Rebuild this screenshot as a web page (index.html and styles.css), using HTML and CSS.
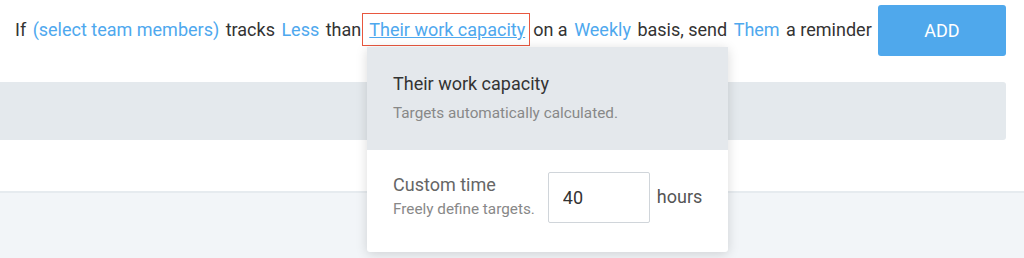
FILE: index.html
```html
<!DOCTYPE html>
<html lang="en">
<head>
    <meta charset="UTF-8">
    <meta name="viewport" content="width=device-width, initial-scale=1.0">
    <title>Reminder rule</title>
    <link rel="stylesheet" href="styles.css">
</head>
<body>
    <div class="rule-row">
        <p class="sentence">
            If <a class="pick">(select team members)</a> tracks <a class="pick">Less</a> than<a class="pick active">Their work capacity</a>on a <a class="pick">Weekly</a> basis, send <a class="pick">Them</a> a reminder
        </p>
        <button class="add-btn">ADD</button>
    </div>

    <div class="rule-bar"></div>
    <div class="blank-row"></div>
    <div class="footer-area"></div>

    <!-- dropdown for the target option -->
    <div class="target-menu">
        <div class="menu-option selected">
            <div class="option-title">Their work capacity</div>
            <div class="option-note">Targets automatically calculated.</div>
        </div>
        <div class="menu-option custom">
            <div class="custom-text">
                <div class="option-title">Custom time</div>
                <div class="option-note">Freely define targets.</div>
            </div>
            <input type="text" class="hours-input" value="40">
            <span class="hours-label">hours</span>
        </div>
    </div>
</body>
</html>
```

FILE: styles.css
```css
body {
    margin: 0;
    font-family: Roboto, "Liberation Sans", sans-serif;
    background-color: #fff;
    color: #333;
    position: relative;
    height: 258px;
    overflow: hidden;
}
.rule-row {
    display: flex;
    justify-content: space-between;
    align-items: center;
    padding: 5px 18px 0 15px;
}
.sentence {
    margin: 0 0 2px 0;
    font-size: 18px;
    white-space: nowrap;
}
.pick {
    color: #4ea8ee;
    padding: 0 2px;
    cursor: pointer;
}
.pick.active {
    text-decoration: underline;
    border: 1px solid #e8573f;
    padding: 5px 4px 5px 6px;
    margin: 0 3px 0 1px;
}
.add-btn {
    flex-shrink: 0;
    width: 128px;
    height: 51px;
    background-color: #4fa8ec;
    color: #fff;
    border: none;
    border-radius: 3px;
    font-family: inherit;
    font-size: 18px;
    cursor: pointer;
}
.rule-bar {
    margin: 26px 18px 0 0;
    height: 58px;
    background-color: #e4e9ed;
    border-radius: 0 3px 3px 0;
}
.blank-row {
    height: 51px;
}
.footer-area {
    border-top: 2px solid #e6ebef;
    background-color: #f2f5f8;
    height: 70px;
}
.target-menu {
    position: absolute;
    left: 367px;
    top: 47px;
    width: 361px;
    background-color: #fff;
    border-radius: 0 0 3px 3px;
    box-shadow: 0 2px 12px rgba(0, 0, 0, 0.15);
}
.menu-option {
    padding: 0 26px;
}
.menu-option.selected {
    background-color: #e4e8ec;
    height: 103px;
    padding-top: 26px;
    box-sizing: border-box;
}
.menu-option.custom {
    display: flex;
    align-items: flex-start;
    height: 102px;
    padding-top: 22px;
    box-sizing: border-box;
}
.option-title {
    font-size: 18px;
    color: #333;
}
.option-note {
    font-size: 15.3px;
    color: #888;
    margin-top: 10px;
}
.custom-text {
    flex-shrink: 0;
    white-space: nowrap;
    margin: 2px 13px 0 0;
}
.custom .option-title {
    color: #666;
}
.custom .option-note {
    margin-top: 5px;
}
.hours-input {
    flex-shrink: 0;
    width: 102px;
    height: 51px;
    box-sizing: border-box;
    border: 1px solid #d0d5da;
    border-radius: 2px;
    padding: 0 14px;
    font-family: inherit;
    font-size: 18px;
    color: #333;
}
.hours-label {
    font-size: 18px;
    color: #555;
    margin: 14px 0 0 7px;
}
```
